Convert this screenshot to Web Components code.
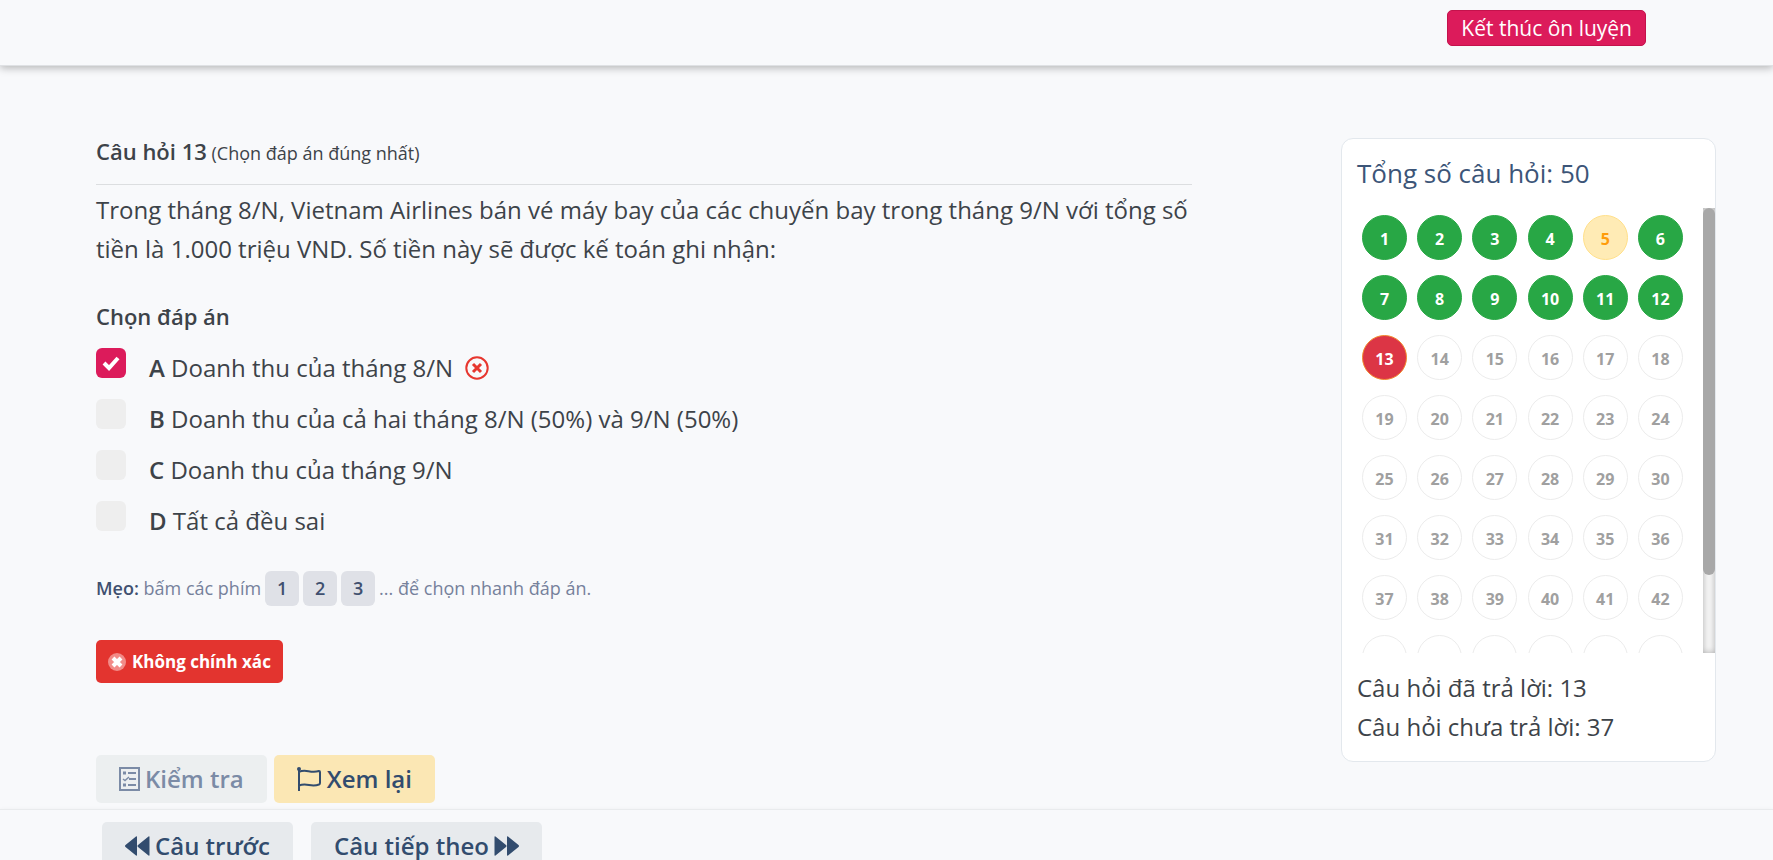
<!DOCTYPE html>
<html lang="vi">
<head>
<meta charset="utf-8">
<meta name="viewport" content="width=device-width, initial-scale=1">
<title>Ôn luyện trắc nghiệm</title>
<style>
  body { margin: 0; background: #f8f9fb; color: #3d4349; font: 400 24px/39px "Open Sans", "Noto Sans", sans-serif; }
</style>
</head>
<body>
<quiz-page>
  <page-header slot="header"><quiz-button variant="end">Kết thúc ôn luyện</quiz-button></page-header>
  <quiz-question slot="question" number="Câu hỏi 13" note="(Chọn đáp án đúng nhất)">
    <span slot="text">Trong tháng 8/N, Vietnam Airlines bán vé máy bay của các chuyến bay trong tháng 9/N với tổng số tiền là 1.000 triệu VND. Số tiền này sẽ được kế toán ghi nhận:</span>
    <answer-option letter="A" checked wrong>Doanh thu của tháng 8/N</answer-option>
    <answer-option letter="B">Doanh thu của cả hai tháng 8/N (50%) và 9/N (50%)</answer-option>
    <answer-option letter="C">Doanh thu của tháng 9/N</answer-option>
    <answer-option letter="D">Tất cả đều sai</answer-option>
    <quiz-tip slot="after"></quiz-tip>
    <result-badge slot="after">Không chính xác</result-badge>
    <quiz-button slot="actions" variant="check" icon="list" disabled>Kiểm tra</quiz-button>
    <quiz-button slot="actions" variant="review" icon="flag">Xem lại</quiz-button>
  </quiz-question>
  <question-map slot="side" total="50" answered="13" current="13" review="5"></question-map>
  <page-footer slot="footer">
    <quiz-button variant="nav" icon="back">Câu trước</quiz-button>
    <quiz-button variant="nav" icon="forward" icon-end>Câu tiếp theo</quiz-button>
  </page-footer>
</quiz-page>

<script>
const ICONS = {
  list: `<svg width="21" height="24" viewBox="0 0 21 24" fill="none" stroke="currentColor" stroke-width="2"><path d="M1 1h19v22H1z"/><path d="M9 6h8M10 12h7M9 18h8"/><path d="M4 6h3M4 18h3" stroke-width="3"/><path d="M4 12l2 1.500 4-3.500" stroke-width="1.500"/></svg>`,
  flag: `<svg width="25" height="24" viewBox="0 0 25 24" fill="none" stroke="currentColor" stroke-width="2"><path d="M2 2v22M2 5c7-4 11 2 20-1q1 0 1 1v11q0 1-1 1.500c-8 3-12-2-20 1"/><circle cx="2" cy="2" r="2" fill="currentColor" stroke="none"/></svg>`,
  back: `<svg width="25" height="20" viewBox="0 0 25 20" fill="currentColor"><path d="M12 1v18q0 1-1 .5L.5 11q-1-1 0-2L11 .5q1-.5 1 .5zM24.500 1v18q0 1-1 .5L13 11q-1-1 0-2L23.500.5q1-.5 1 .5z"/></svg>`,
  forward: `<svg width="25" height="20" viewBox="0 0 25 20" fill="currentColor"><path d="M.5 1v18q0 1 1 .5L12 11q1-1 0-2L1.500.5q-1-.5-1 .5zM13 1v18q0 1 1 .5l10.500-8.500q1-1 0-2L14 .5q-1-.5-1 .5z"/></svg>`
};

class BaseElement extends HTMLElement {
  connectedCallback() {
    if (this.shadowRoot) return;
    const template = document.createElement('template');
    template.innerHTML = this.render();
    this.attachShadow({ mode: 'open' }).append(template.content.cloneNode(true));
    this.ready();
  }
  ready() {}
}

customElements.define('quiz-page', class extends BaseElement {
  render() {
    return `<style>
      :host { display: block; overflow: hidden; }
      main { display: flex; align-items: flex-start; justify-content: space-between; gap: 24px; padding: 72px 57px 6px 96px; }
      .question { flex: 0 1 1096px; min-width: 0; }
      aside { flex: 0 0 375px; }
    </style>
    <slot name="header"></slot>
    <main><div class="question"><slot name="question"></slot></div><aside><slot name="side"></slot></aside></main>
    <slot name="footer"></slot>`;
  }
});

customElements.define('page-header', class extends BaseElement {
  render() {
    return `<style>
      :host { display: block; }
      header { display: flex; justify-content: flex-end; padding: 10px 127px 19px; border-bottom: 1px solid #dfe1e4; box-shadow: 0 2px 8px rgba(0,0,0,.28); }
    </style><header><slot></slot></header>`;
  }
});

customElements.define('page-footer', class extends BaseElement {
  render() {
    return `<style>
      :host { display: block; }
      footer { display: flex; gap: 18px; padding: 12px 102px; border-top: 1px solid #e9ebed; box-shadow: 0 0 4px rgba(0,0,0,.04); }
    </style><footer><slot></slot></footer>`;
  }
});

customElements.define('quiz-button', class extends BaseElement {
  render() {
    const icon = ICONS[this.getAttribute('icon')] || '';
    const end = this.hasAttribute('icon-end');
    return `<style>
      :host { display: block; }
      button { display: flex; align-items: center; justify-content: center; gap: 5px; height: 48px; padding: 0 23px; border: 0; border-radius: 5px; color: #324c6e; font: 600 24px/32px "Open Sans", "Noto Sans", sans-serif; white-space: nowrap; }
      svg { flex: none; }
      .end { height: 36px; padding: 0 13px; border: 1px solid #c4124c; background: #dc1b5b; color: #fff; font-size: 21px; font-weight: 400; }
      .check { background: #eceff0; color: #7b8ba6; }
      .review { background: #fbe7b4; }
      .nav { background: #e7eaed; }
    </style>
    <button type="button" class="${this.getAttribute('variant')}" ${this.hasAttribute('disabled') ? 'disabled' : ''}>${end ? '' : icon}<span><slot></slot></span>${end ? icon : ''}</button>`;
  }
});

customElements.define('quiz-question', class extends BaseElement {
  render() {
    return `<style>
      :host { display: block; }
      h1, h2, p { margin: 0; }
      h1 { padding-bottom: 18px; border-bottom: 1px solid #dcdee0; font-size: 18px; font-weight: 400; line-height: 26px; }
      h1 b, h2 { font-size: 22px; font-weight: 600; }
      p { padding-top: 5px; }
      h2 { margin-top: 32px; line-height: 32px; }
      .answers { display: grid; gap: 12px; margin-top: 16px; }
      .actions { display: flex; gap: 7px; margin-top: 72px; }
    </style>
    <h1><b>${this.getAttribute('number')}</b> ${this.getAttribute('note')}</h1>
    <p><slot name="text"></slot></p>
    <h2>Chọn đáp án</h2>
    <div class="answers"><slot></slot></div>
    <slot name="after"></slot>
    <div class="actions"><slot name="actions"></slot></div>`;
  }
});

customElements.define('answer-option', class extends BaseElement {
  render() {
    return `<style>
      :host { display: block; }
      label { display: flex; align-items: flex-start; gap: 23px; }
      .box { display: grid; flex: none; }
      .box > * { grid-area: 1 / 1; }
      input { appearance: none; width: 30px; height: 30px; margin: 0; border-radius: 6px; background: #eee; }
      input:checked { background: #dc1b5b; }
      .tick { place-self: center; display: none; }
      input:checked + .tick { display: block; }
      .text { line-height: 39px; }
      b { font-weight: 600; }
      .wrong { margin-left: 6px; vertical-align: -3px; }
    </style>
    <label>
      <span class="box"><input type="checkbox" ${this.hasAttribute('checked') ? 'checked' : ''}>
        <svg class="tick" width="18" height="16" viewBox="0 0 18 16" fill="none" stroke="#fff" stroke-width="4"><path d="M2 8l5 5L16 3"/></svg></span>
      <span class="text"><b>${this.getAttribute('letter')}</b> <slot></slot>${this.hasAttribute('wrong') ? `
        <svg class="wrong" width="24" height="24" viewBox="0 0 24 24" fill="none" stroke="#e7372f"><circle cx="12" cy="12" r="10.700" stroke-width="2"/><path d="M8 8l8 8M16 8l-8 8" stroke-width="3"/></svg>` : ''}</span>
    </label>`;
  }
});

customElements.define('quiz-tip', class extends BaseElement {
  render() {
    return `<style>
      :host { display: block; margin-top: 31px; color: #76819b; font-size: 18px; line-height: 35px; }
      div { display: flex; align-items: center; gap: 4px; }
      b { color: #40506f; font-weight: 600; }
      kbd { width: 34px; height: 35px; border-radius: 6px; background: #dfe1e7; color: #40506f; font: 600 18px/35px "Open Sans", "Noto Sans", sans-serif; text-align: center; }
    </style>
    <div><span><b>Mẹo:</b> bấm các phím</span><kbd>1</kbd><kbd>2</kbd><kbd>3</kbd><span>... để chọn nhanh đáp án.</span></div>`;
  }
});

customElements.define('result-badge', class extends BaseElement {
  render() {
    return `<style>
      :host { display: flex; align-items: center; gap: 6px; width: max-content; height: 43px; margin-top: 34px; padding: 0 12px; border-radius: 5px; background: #e3342f; color: #fff; font-size: 17px; font-weight: 700; line-height: 24px; }
    </style>
    <svg width="18" height="18" viewBox="0 0 18 18" fill="none" stroke="#fff"><circle cx="9" cy="9" r="9" fill="#f28b88" stroke="none"/><path d="M5 5l8 8M13 5l-8 8" stroke-width="4"/></svg>
    <span><slot></slot></span>`;
  }
});

customElements.define('question-map', class extends BaseElement {
  render() {
    const [total, answered, current, review] = ['total', 'answered', 'current', 'review'].map(n => Number(this.getAttribute(n)));
    let items = '';
    for (let i = 1; i <= total; i++) {
      const state = i === review ? 'review' : i === current ? 'wrong' : i < current ? 'right' : '';
      items += `<li><button type="button" class="${state}">${i}</button></li>`;
    }
    return `<style>
      :host { display: block; }
      section { border: 1px solid #e3e8ed; border-radius: 12px; background: #fff; padding: 14px 0 5px; }
      h2 { margin: 0 0 14px; padding: 0 15px; color: #3c5578; font-size: 26px; font-weight: 400; line-height: 41px; }
      .list { display: flex; height: 445px; }
      ol { flex: 1; display: grid; grid-template-columns: repeat(6, 45px); justify-content: space-between; align-content: start; row-gap: 15px; margin: 0; padding: 7px 20px 8px; overflow-y: auto; scrollbar-width: none; list-style: none; }
      .track { flex: 0 0 12px; background: #f5f5f5; box-shadow: inset 0 0 6px rgba(0,0,0,.3); }
      .thumb { border-radius: 6px; background: #a8a8a8; }
      button { display: block; width: 45px; height: 45px; padding: 3px 0 0; border: 1px solid #ececec; border-radius: 50%; background: #fff; color: #a0a0a0; font: 700 16px/22px "Open Sans", "Noto Sans", sans-serif; }
      .right { background: #28a745; border-color: #28a745; color: #fff; }
      .wrong { background: #dc3545; border-color: #f28a2e; color: #fff; }
      .review { background: #ffebb5; border-color: #ffe08a; color: #ff9c0a; }
      .stats { padding: 15px 15px 10px; }
      p { margin: 0; }
    </style>
    <section>
      <h2>Tổng số câu hỏi: ${total}</h2>
      <div class="list"><ol>${items}</ol><div class="track"><div class="thumb"></div></div></div>
      <div class="stats"><p>Câu hỏi đã trả lời: ${answered}</p><p>Câu hỏi chưa trả lời: ${total - answered}</p></div>
    </section>`;
  }
  ready() {
    const list = this.shadowRoot.querySelector('ol');
    const thumb = this.shadowRoot.querySelector('.thumb');
    const update = () => {
      const ratio = list.clientHeight / list.scrollHeight;
      thumb.style.height = `${Math.round(list.clientHeight * ratio)}px`;
      thumb.style.transform = `translateY(${Math.round(list.scrollTop * ratio)}px)`;
    };
    list.addEventListener('scroll', update);
    update();
  }
});
</script>
</body>
</html>
